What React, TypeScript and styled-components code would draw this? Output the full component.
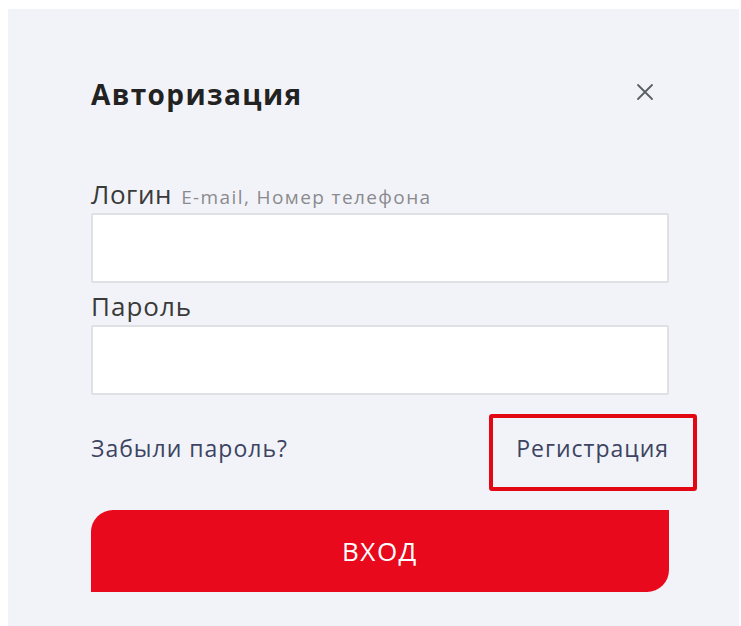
import React, { useState } from 'react';
import styled, { createGlobalStyle } from 'styled-components';

const GlobalStyle = createGlobalStyle`
    html, body {
        margin: 0;
        padding: 0;
        background: #ffffff;
    }
    body {
        font-family: "Open Sans", "Liberation Sans", Arial, sans-serif;
    }
`;

const Page = styled.div`
    padding: 9px 2px 0 8px;
    height: 626px;
    box-sizing: border-box;
    overflow: hidden;
`;

const Modal = styled.div`
    background-color: #f2f3f8;
    height: 100%;
    box-sizing: border-box;
    padding: 65px 70px 0 83px;
    display: flex;
    flex-direction: column;
`;

const Header = styled.div`
    height: 40px;
    display: flex;
    align-items: center;
    justify-content: space-between;
`;

const Title = styled.h2`
    margin: 0;
    font-size: 28px;
    font-weight: 700;
    color: #222222;
    letter-spacing: 1.4px;
`;

const CloseButton = styled.button`
    border: none;
    background: transparent;
    padding: 0;
    margin: -4px 12px 0 0;
    width: 24px;
    height: 24px;
    cursor: pointer;
    display: flex;
    align-items: center;
    justify-content: center;
`;

const Label = styled.label<{ $first?: boolean }>`
    display: block;
    height: 30px;
    line-height: 30px;
    margin-top: ${(p) => (p.$first ? '65px' : '8px')};
    font-size: 26px;
    color: #3a3a3a;
    letter-spacing: ${(p) => (p.$first ? '0.6px' : '1px')};
`;

const Hint = styled.span`
    font-size: 19px;
    color: #8a8a8f;
    margin-left: 9px;
    letter-spacing: 1.4px;
`;

const Input = styled.input`
    display: block;
    width: 100%;
    height: 70px;
    box-sizing: border-box;
    margin-top: 4px;
    border: 2px solid #dfe0e4;
    border-radius: 2px;
    background: #ffffff;
    font-size: 18px;
    padding: 0 16px;
    outline: none;
`;

const Links = styled.div`
    margin-top: 33px;
    height: 40px;
    display: flex;
    align-items: center;
    justify-content: space-between;
`;

const TextLink = styled.a<{ $marked?: boolean }>`
    position: relative;
    font-size: 23px;
    line-height: 30px;
    letter-spacing: 1px;
    color: #3c4462;
    text-decoration: none;
    cursor: pointer;

    ${(p) =>
        p.$marked &&
        `
        &::after {
            content: '';
            position: absolute;
            left: -27px;
            right: -28px;
            top: -19px;
            bottom: -28px;
            border: 4px solid #e30613;
            border-radius: 3px;
        }
    `}
`;

const SubmitButton = styled.button`
    margin-top: 42px;
    height: 82px;
    width: 100%;
    border: none;
    background-color: #e8091c;
    color: #ffffff;
    font-family: inherit;
    font-size: 26px;
    letter-spacing: 1.5px;
    border-radius: 22px 0 22px 0;
    cursor: pointer;
`;

const CloseIcon = () => (
    <svg width="18" height="18" viewBox="0 0 18 18">
        <path d="M2 2L16 16M16 2L2 16" stroke="#5a5f66" strokeWidth="1.8" strokeLinecap="round" />
    </svg>
);

const App: React.FC = () => {
    const [login, setLogin] = useState('');
    const [password, setPassword] = useState('');

    return (
        <>
            <GlobalStyle />
            <Page>
                <Modal>
                    <Header>
                        <Title>Авторизация</Title>
                        <CloseButton aria-label="Закрыть">
                            <CloseIcon />
                        </CloseButton>
                    </Header>

                    <Label $first htmlFor="login">
                        Логин<Hint>E-mail, Номер телефона</Hint>
                    </Label>
                    <Input id="login" value={login} onChange={(e) => setLogin(e.target.value)} />

                    <Label htmlFor="password">Пароль</Label>
                    <Input
                        id="password"
                        type="password"
                        value={password}
                        onChange={(e) => setPassword(e.target.value)}
                    />

                    <Links>
                        <TextLink>Забыли пароль?</TextLink>
                        <TextLink $marked>Регистрация</TextLink>
                    </Links>

                    <SubmitButton>ВХОД</SubmitButton>
                </Modal>
            </Page>
        </>
    );
};

export default App;
